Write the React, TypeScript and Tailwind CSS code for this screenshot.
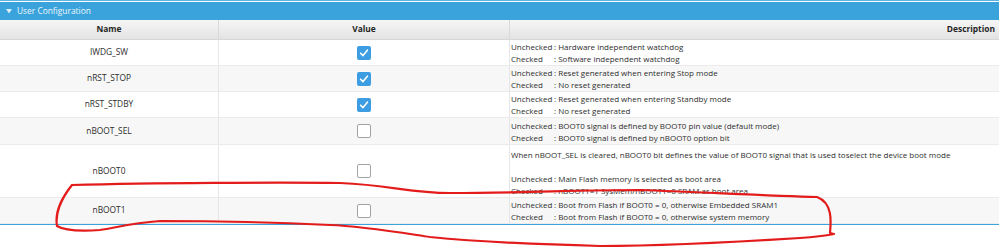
import * as React from "react";

type Row = {
  name: string;
  checked: boolean;
  lines: { label?: string; text: string }[];
  h: string;
  tall?: boolean;
};

const rows: Row[] = [
  {
    name: "IWDG_SW",
    checked: true,
    h: "h-[26px]",
    lines: [
      { label: "Unchecked", text: "Hardware independent watchdog" },
      { label: "Checked", text: "Software independent watchdog" },
    ],
  },
  {
    name: "nRST_STOP",
    checked: true,
    h: "h-[26px]",
    lines: [
      { label: "Unchecked", text: "Reset generated when entering Stop mode" },
      { label: "Checked", text: "No reset generated" },
    ],
  },
  {
    name: "nRST_STDBY",
    checked: true,
    h: "h-[26px]",
    lines: [
      { label: "Unchecked", text: "Reset generated when entering Standby mode" },
      { label: "Checked", text: "No reset generated" },
    ],
  },
  {
    name: "nBOOT_SEL",
    checked: false,
    h: "h-[27px]",
    lines: [
      { label: "Unchecked", text: "BOOT0 signal is defined by BOOT0 pin value (default mode)" },
      { label: "Checked", text: "BOOT0 signal is defined by nBOOT0 option bit" },
    ],
  },
  {
    name: "nBOOT0",
    checked: false,
    tall: true,
    h: "h-[53px]",
    lines: [
      { text: "When nBOOT_SEL is cleared, nBOOT0 bit defines the value of BOOT0 signal that is used toselect the device boot mode" },
      { text: "\u00a0" },
      { label: "Unchecked", text: "Main Flash memory is selected as boot area" },
      { label: "Checked", text: "nBOOT1=1 SysMem/nBOOT1=0 SRAM as boot area" },
    ],
  },
  {
    name: "nBOOT1",
    checked: false,
    h: "h-[26px]",
    lines: [
      { label: "Unchecked", text: "Boot from Flash if BOOT0 = 0, otherwise Embedded SRAM1" },
      { label: "Checked", text: "Boot from Flash if BOOT0 = 0, otherwise system memory" },
    ],
  },
];

function Checkbox({ checked }: { checked: boolean }) {
  if (checked) {
    return (
      <div className="size-[14px] rounded-[2px] bg-[#3c9de2] flex items-center justify-center">
        <svg width="10" height="10" viewBox="0 0 10 10" fill="none">
          <path d="M1.6 5.2 L4 7.6 L8.4 2.2" stroke="white" strokeWidth="1.6" strokeLinecap="round" strokeLinejoin="round" />
        </svg>
      </div>
    );
  }
  return <div className="size-[14px] rounded-[2px] bg-white border border-[#a3a3a3]" />;
}

export default function App() {
  return (
    <div
      className="relative w-[999px] h-[248px] bg-white overflow-hidden text-[#2e2e2e]"
      style={{ fontFamily: '"Open Sans", "Noto Sans", sans-serif' }}
    >
      <div className="h-px bg-[#5db4e2]" />
      <div className="h-px bg-white" />
      <div className="h-[18px] bg-[#3ba3db] flex items-center pl-[6px] gap-[5px]">
        <svg width="6" height="5" viewBox="0 0 6 5">
          <path d="M0 0 H6 L3 4.5 Z" fill="#dbeef9" />
        </svg>
        <span className="text-[8.4px] text-[#eef7fc] leading-none">User Configuration</span>
      </div>

      <div className="grid grid-cols-[219px_291px_1fr] h-[20px] bg-linear-to-b from-[#f6f6f6] to-[#e3e3e3] border-b border-[#d6d6d6] text-[8.4px] font-bold text-[#262626]">
        <div className="border-r border-[#d9d9d9] flex items-center justify-center">Name</div>
        <div className="border-r border-[#d9d9d9] flex items-center justify-center">Value</div>
        <div className="flex items-center justify-end pr-[4px]">Description</div>
      </div>

      {rows.map((r, i) => (
        <div
          key={r.name}
          className={`grid grid-cols-[219px_291px_1fr] border-b border-[#ebebeb] ${r.h} ${i % 2 === 0 ? "bg-white" : "bg-[#f7f7f7]"}`}
        >
          <div className="border-r border-[#e6e6e6] flex items-center justify-center text-[8.4px]">{r.name}</div>
          <div className="border-r border-[#e6e6e6] flex items-center justify-center">
            <Checkbox checked={r.checked} />
          </div>
          <div className={`pl-[1px] flex flex-col text-[8px] leading-[12px] whitespace-nowrap ${r.tall ? "justify-start pt-[4px]" : "justify-center pt-[1px]"}`}>
            {r.lines.map((l, j) => (
              <div key={j}>
                {l.label ? (
                  <>
                    <span className="inline-block w-[43px]">{l.label}</span>
                    <span>: {l.text}</span>
                  </>
                ) : (
                  l.text
                )}
              </div>
            ))}
          </div>
        </div>
      ))}
      <div className="h-px bg-[#3ba3db]" />

      <svg className="absolute inset-0 pointer-events-none" width="999" height="248" viewBox="0 0 999 248" fill="none">
        <path
          d="M72 185 C 150 183, 280 182, 340 183 C 390 185, 410 193, 450 193 C 520 193, 580 190, 640 190 C 700 192, 770 196, 817 197 C 833 203, 831 222, 830 233 L 834 234 C 824 236, 815 237, 800 238 C 720 243, 650 246, 600 246 C 520 244, 470 241, 430 237 C 390 231, 360 226, 330 225 C 270 222, 200 221, 160 221 C 130 223, 115 228, 100 230 C 85 231, 65 231, 57 226 C 55 215, 60 200, 72 185"
          stroke="#e31b1b"
          strokeWidth="2.2"
          strokeLinecap="round"
          strokeLinejoin="round"
        />
      </svg>
    </div>
  );
}
